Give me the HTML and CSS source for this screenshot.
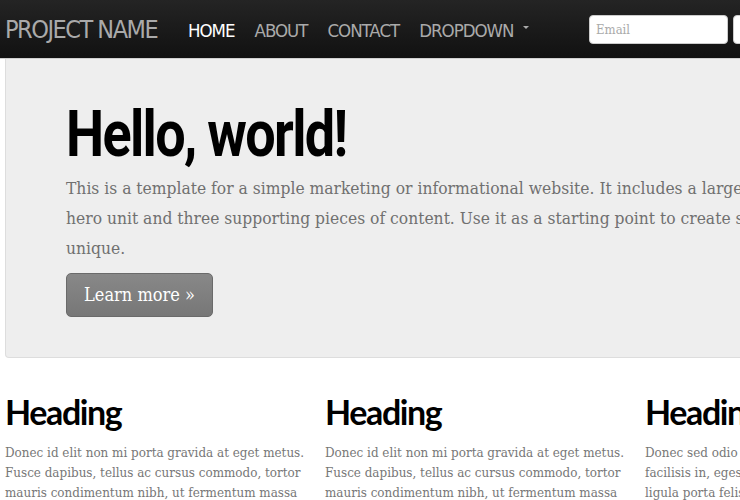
FILE: index.html
```html
<!DOCTYPE html>
<html>
<head>
<meta charset="utf-8">
<link rel="stylesheet" href="styles.css">
</head>
<body>
<div class="navbar">
  <div class="nav-inner">
    <a class="brand">PROJECT NAME</a>
    <ul class="nav">
      <li class="active">HOME</li>
      <li>ABOUT</li>
      <li>CONTACT</li>
      <li class="dropdown">DROPDOWN<span class="caret"></span></li>
    </ul>
    <form class="nav-form">
      <input class="nav-input" type="text" placeholder="Email">
      <input class="nav-input" type="password" placeholder="Password">
    </form>
  </div>
</div>
<div class="container">
  <div class="hero">
    <h1 class="hero-title">Hello, world!</h1>
    <p class="hero-text">This is a template for a simple marketing or informational website. It includes a large callout called the hero unit and three supporting pieces of content. Use it as a starting point to create something more unique.</p>
    <a class="btn-hero">Learn more &raquo;</a>
  </div>
  <div class="row">
    <div class="col">
      <h2 class="col-title">Heading</h2>
      <p class="col-text">Donec id elit non mi porta gravida at eget metus. Fusce dapibus, tellus ac cursus commodo, tortor mauris condimentum nibh, ut fermentum massa justo sit amet risus. Etiam porta sem malesuada magna mollis euismod. Donec sed odio dui.</p>
    </div>
    <div class="col">
      <h2 class="col-title">Heading</h2>
      <p class="col-text">Donec id elit non mi porta gravida at eget metus. Fusce dapibus, tellus ac cursus commodo, tortor mauris condimentum nibh, ut fermentum massa justo sit amet risus. Etiam porta sem malesuada magna mollis euismod. Donec sed odio dui.</p>
    </div>
    <div class="col">
      <h2 class="col-title">Heading</h2>
      <p class="col-text">Donec sed odio dui. Cras justo odio, dapibus ac facilisis in, egestas eget quam. Vestibulum id ligula porta felis euismod semper. Fusce dapibus, tellus ac cursus commodo, tortor mauris condimentum nibh, ut fermentum massa justo sit amet risus.</p>
    </div>
  </div>
</div>
</body>
</html>
```
FILE: styles.css
```css
html, body {
  margin: 0;
  padding: 0;
  overflow: hidden;
  background: #fff;
}
body {
  width: 740px;
  height: 500px;
  font-family: "DejaVu Serif", serif;
}
.navbar {
  height: 58px;
  background: linear-gradient(#242424, #111);
  border-bottom: 1px solid #cfcfcf;
}
.nav-inner {
  display: flex;
  align-items: center;
  height: 58px;
  padding-left: 5px;
  width: 960px;
}
.brand {
  width: 183px;
  flex: none;
  font-family: "DejaVu Sans Condensed", "DejaVu Sans", sans-serif;
  font-size: 25px;
  color: #aaa;
  letter-spacing: -1.5px;
}
.nav {
  display: flex;
  align-items: center;
  width: 401px;
  flex: none;
  list-style: none;
  margin: 0;
  padding: 0;
  gap: 20px;
}
.nav li {
  font-family: "DejaVu Sans Condensed", "DejaVu Sans", sans-serif;
  font-size: 18.5px;
  color: #aaa;
  letter-spacing: -1px;
  padding-top: 2px;
}
.nav li.active {
  color: #fff;
}
.caret {
  display: inline-block;
  width: 0;
  height: 0;
  border-left: 3px solid transparent;
  border-right: 3px solid transparent;
  border-top: 3px solid #aaa;
  vertical-align: middle;
  margin-left: 9px;
  margin-bottom: 8px;
}
.nav-form {
  display: flex;
  gap: 5px;
  margin-top: 1px;
}
.nav-input {
  flex: none;
  width: 139px;
  height: 29px;
  box-sizing: border-box;
  padding: 4px 6px;
  border: 1px solid #ccc;
  border-radius: 4px;
  background: #fff;
  font-family: "DejaVu Serif", serif;
  font-stretch: condensed;
  font-size: 13px;
}
.nav-input::placeholder {
  color: #aaa;
}
.container {
  width: 940px;
  margin-left: 5px;
}
.hero {
  background: #eee;
  border: 1px solid #ddd;
  border-top: none;
  border-radius: 0 0 4px 4px;
  padding: 40px 60px 40px;
}
.hero-title {
  margin: 0;
  font-family: Roboto, sans-serif;
  font-weight: 700;
  font-size: 65px;
  letter-spacing: -2px;
  line-height: 70px;
  color: #000;
  transform: scaleX(0.83);
  transform-origin: left center;
}
.hero-text {
  margin: 4px 0 10px;
  font-family: "DejaVu Serif", serif;
  font-stretch: condensed;
  font-size: 17.3px;
  line-height: 30px;
  color: #707070;
}
.btn-hero {
  display: inline-block;
  box-sizing: border-box;
  width: 147px;
  height: 44px;
  line-height: 42px;
  text-align: center;
  border: 1px solid #6a6a6a;
  border-radius: 5px;
  background: linear-gradient(#888, #777);
  color: #fff;
  font-family: "DejaVu Serif", serif;
  font-stretch: condensed;
  font-size: 18px;
}
.row {
  display: flex;
  gap: 20px;
  margin-top: 30px;
}
.col {
  width: 300px;
  flex: none;
}
.col-title {
  margin: 0;
  font-family: Lato, sans-serif;
  font-weight: 700;
  font-size: 34px;
  letter-spacing: -1.4px;
  line-height: 48px;
  color: #000;
}
.col-text {
  margin: 7px 0 0;
  font-family: "DejaVu Serif", serif;
  font-stretch: condensed;
  font-size: 13.3px;
  line-height: 20px;
  color: #777;
}
```
